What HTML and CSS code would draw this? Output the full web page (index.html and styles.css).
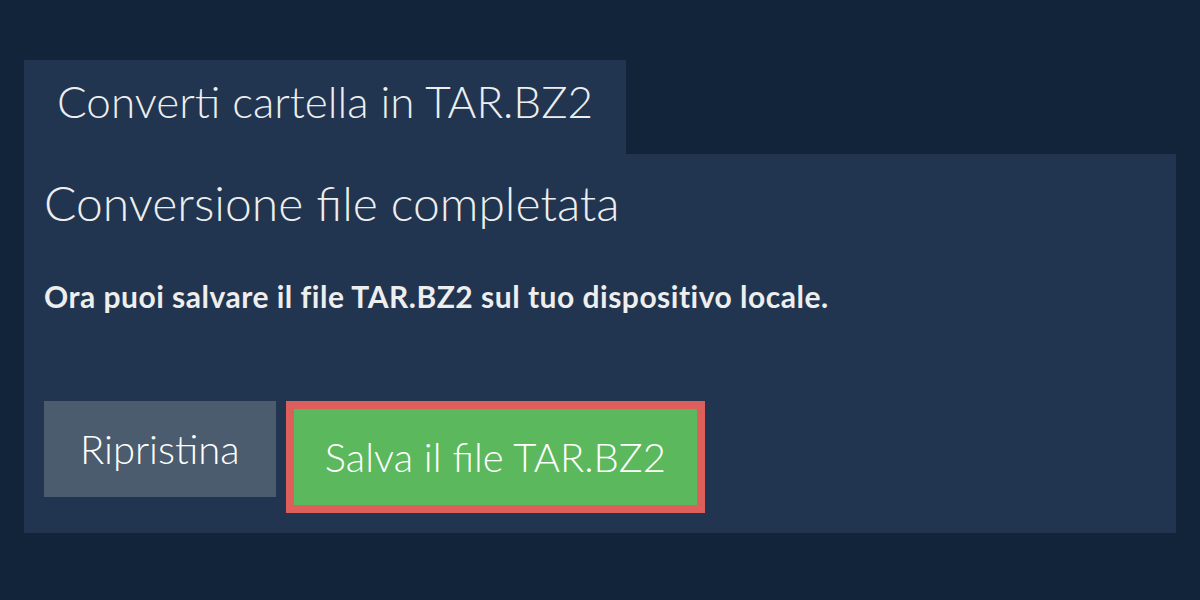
FILE: index.html
```html
<!DOCTYPE html>
<html lang="it">
<head>
  <meta charset="UTF-8" />
  <title>Converti cartella in TAR.BZ2</title>
  <link rel="stylesheet" href="styles.css">
</head>
<body>
  <div class="wrap">
    <div class="tab">Converti cartella in TAR.BZ2</div>
    <div class="panel">
      <h2>Conversione file completata</h2>
      <p class="msg">Ora puoi salvare il file TAR.BZ2 sul tuo dispositivo locale.</p>
      <div class="actions">
        <button class="btn btn-reset">Ripristina</button>
        <button class="btn btn-save">Salva il file TAR.BZ2</button>
      </div>
    </div>
  </div>
</body>
</html>
```

FILE: styles.css
```css
body {
  margin: 0;
  font-family: 'Lato', sans-serif;
  background-color: #11243a;
  color: #eeeeee;
}

.wrap {
  padding: 60px 24px;
}

.tab {
  display: inline-block;
  background: #213550;
  padding: 0 33px;
  height: 94px;
  line-height: 82px;
  font-size: 44px;
  font-weight: 300;
}

.panel {
  background: #213550;
  padding: 21px 20px 20px;
}

h2 {
  margin: 0;
  font-size: 48px;
  font-weight: 300;
  line-height: 56px;
}

.msg {
  margin: 47px 0 0;
  font-size: 30px;
  font-weight: 700;
  letter-spacing: 0.5px;
}

.actions {
  display: flex;
  align-items: flex-start;
  gap: 10px;
  margin-top: 87px;
}

.btn {
  font-family: 'Lato', sans-serif;
  font-size: 40px;
  font-weight: 300;
  color: #ffffff;
  border: none;
  height: 96px;
  padding: 0 36px;
  cursor: pointer;
}

.btn-reset {
  background: #4b5c6e;
}

.btn-save {
  background: #5cb85c;
  border: 8px solid #dc5f5c;
  height: 112px;
  padding: 0 31px;
}
```
